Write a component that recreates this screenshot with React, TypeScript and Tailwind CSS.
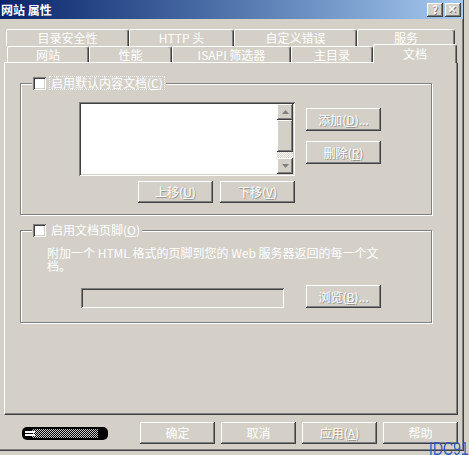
import clsx from 'clsx';

const raised =
	'shadow-[inset_-1px_-1px_#404040,inset_1px_1px_#ffffff,inset_-2px_-2px_#808080,inset_2px_2px_#d4d0c8]';
const sunken =
	'shadow-[inset_1px_1px_#808080,inset_-1px_-1px_#ffffff,inset_2px_2px_#404040,inset_-2px_-2px_#d4d0c8]';
const etched = 'border border-[#808080] shadow-[inset_1px_1px_#ffffff,1px_1px_#ffffff]';
const dim = '[text-shadow:1px_1px_0_#9a9892]';

const backTabs = [
	{ label: '目录安全性', w: 'w-[123px]' },
	{ label: 'HTTP 头', w: 'w-[105px]' },
	{ label: '自定义错误', w: 'w-[123px]' },
	{ label: '服务', w: 'w-[98px]' },
];

const frontTabs = [
	{ label: '网站', w: 'w-[82px]' },
	{ label: '性能', w: 'w-[83px]' },
	{ label: 'ISAPI 筛选器', w: 'w-[119px]' },
	{ label: '主目录', w: 'w-[82px]' },
];

function Tab({ label, w }: { label: string; w: string }) {
	return (
		<div
			className={clsx(
				w,
				'flex h-[17px] items-center justify-center rounded-tl-[2px] rounded-tr-[3px] border-l border-t border-r border-l-white border-t-white border-r-[#404040] shadow-[inset_-1px_0_#808080] text-white',
			)}
		>
			{label}
		</div>
	);
}

function Button({ children, className }: { children: React.ReactNode; className?: string }) {
	return (
		<div
			className={clsx(
				'flex w-[75px] items-center justify-center bg-[#d4d0c8] text-white',
				raised,
				className,
			)}
		>
			{children}
		</div>
	);
}

function Key({ k }: { k: string }) {
	return (
		<span>
			(<span className="underline">{k}</span>)
		</span>
	);
}

function Checkbox() {
	return <div className={clsx('h-[13px] w-[13px] bg-white', sunken)} />;
}

function Arrow({ up }: { up?: boolean }) {
	return (
		<div className={clsx('flex h-[16px] w-[16px] items-center justify-center bg-[#d4d0c8]', raised)}>
			<svg width="7" height="4" viewBox="0 0 7 4">
				{up ? (
					<path d="M3.5 0 L7 4 L0 4 Z" fill="#808080" />
				) : (
					<path d="M0 0 L7 0 L3.5 4 Z" fill="#808080" />
				)}
			</svg>
		</div>
	);
}

export default function App() {
	return (
		<div className="relative h-[455px] w-[469px] overflow-hidden bg-[#d4d0c8] font-['Noto_Sans_CJK_SC','Liberation_Sans',sans-serif] text-[12px] leading-[12px]">
			<div className="flex h-[451px] w-[464px] flex-col border-r border-b border-[#404040] shadow-[inset_-1px_-1px_#808080]">
				{/* title bar */}
				<div className="flex h-[19px] items-center bg-gradient-to-r from-[#0a246a] to-[#a6caf0] pl-[1px] pr-[2px]">
					<span className="font-bold text-white">网站 属性</span>
					<div className="ml-auto flex gap-[2px]">
						<div className={clsx('flex h-[14px] w-[16px] items-center justify-center bg-[#d4d0c8]', raised)}>
							<span className="text-[11px] font-bold leading-[11px] text-white [text-shadow:1px_1px_0_#808080]">?</span>
						</div>
						<div className={clsx('flex h-[14px] w-[16px] items-center justify-center bg-[#d4d0c8]', raised)}>
							<svg width="8" height="7" viewBox="0 0 8 7">
								<path d="M1 1 L7 7 M7 1 L1 7" stroke="#808080" strokeWidth="1.6" />
								<path d="M0 0 L6 6 M6 0 L0 6" stroke="#ffffff" strokeWidth="1.6" />
							</svg>
						</div>
					</div>
				</div>

				{/* tabs */}
				<div className="ml-[6px] mt-[10px] flex">
					{backTabs.map((t) => (
						<Tab key={t.label} label={t.label} w={t.w} />
					))}
				</div>
				<div className="ml-[7px] flex h-[16px] items-start">
					{frontTabs.map((t) => (
						<Tab key={t.label} label={t.label} w={t.w} />
					))}
					<div className="relative z-10 -mt-[2px] flex h-[19px] w-[84px] items-start justify-center rounded-tl-[2px] rounded-tr-[3px] border-l border-t border-r border-l-white border-t-white border-r-[#404040] bg-[#d4d0c8] pt-[3px] text-white shadow-[inset_-1px_0_#808080]">
						文档
					</div>
				</div>

				{/* panel */}
				<div className="ml-[4px] h-[353px] w-[454px] border-l border-t border-r border-b border-l-white border-t-white border-r-[#404040] border-b-[#404040] shadow-[inset_-1px_-1px_#808080]">
					{/* group 1 */}
					<div className={clsx('relative ml-[15px] mt-[20px] h-[132px] w-[412px]', etched)}>
						<div className="absolute left-[11px] top-[-8px] flex items-start bg-[#d4d0c8] px-[1px]">
							<div className="mt-[1px]">
								<Checkbox />
							</div>
							<div className="ml-[3px] border border-dotted border-white px-[1px] leading-[12px] text-white">
								启用默认内容文档<Key k="C" />
							</div>
						</div>

						<div className="flex pl-[58px] pt-[18px]">
							<div className="flex flex-col">
								<div className={clsx('flex h-[74px] w-[216px] justify-end bg-white p-[2px]', sunken)}>
									<div className="flex w-[16px] flex-col">
										<Arrow up />
										<div className={clsx('h-[32px] bg-[#d4d0c8]', raised)} />
										<div className="h-[6px] bg-[repeating-conic-gradient(#ffffff_0%_25%,#d4d0c8_0%_50%)] bg-[length:2px_2px]" />
										<Arrow />
									</div>
								</div>
								<div className="mt-[5px] flex justify-end gap-[7px]">
									<Button className={clsx('h-[22px]', dim)}>
										上移<Key k="U" />
									</Button>
									<Button className={clsx('h-[22px]', dim)}>
										下移<Key k="V" />
									</Button>
								</div>
							</div>
							<div className="ml-[11px] flex flex-col gap-[10px] pt-[6px]">
								<Button className={clsx('h-[23px]', dim)}>
									添加<Key k="D" />...
								</Button>
								<Button className={clsx('h-[23px]', dim)}>
									删除<Key k="R" />
								</Button>
							</div>
						</div>
					</div>

					{/* group 2 */}
					<div className={clsx('relative ml-[15px] mt-[15px] flex h-[93px] w-[412px] flex-col items-start', etched)}>
						<div className="absolute left-[11px] top-[-8px] flex items-start bg-[#d4d0c8] px-[1px]">
							<div className="mt-[1px]">
								<Checkbox />
							</div>
							<div className="ml-[4px] px-[1px] pt-[1px] text-white">
								启用文档页脚<Key k="O" />
							</div>
						</div>

						<div className="ml-[26px] mt-[15px] text-white">
							<div className="leading-[13px]">附加一个 HTML 格式的页脚到您的 Web 服务器返回的每一个文</div>
							<div className="leading-[13px]">档。</div>
						</div>
						<div className="mt-[13px] flex items-start">
							<div className={clsx('ml-[60px] mt-[3px] h-[20px] w-[203px] bg-[#d4d0c8]', sunken)} />
							<Button className={clsx('ml-[22px] h-[23px]', dim)}>
								浏览<Key k="B" />...
							</Button>
						</div>
					</div>
				</div>

				{/* bottom buttons */}
				<div className="mt-[7px] flex items-center pl-[22px]">
					<div className="relative h-[13px] w-[86px] overflow-hidden rounded-[5px] bg-black">
						<div className="absolute inset-x-[10px] inset-y-[2px] bg-[repeating-conic-gradient(#ffffff_0%_25%,#000000_0%_50%)] bg-[length:2px_2px] opacity-80" />
						<div className="absolute left-[3px] top-[4px] h-[5px] w-[10px] border-y-2 border-white" />
					</div>
					<div className="ml-[32px] flex gap-[6px]">
						<Button className="h-[22px]">确定</Button>
						<Button className="h-[22px]">取消</Button>
						<Button className={clsx('h-[22px]', dim)}>
							应用<Key k="A" />
						</Button>
						<Button className="h-[22px]">帮助</Button>
					</div>
				</div>
			</div>

			<div className="absolute left-[429px] top-[440px] origin-left scale-x-[0.78] font-['Liberation_Sans',sans-serif] text-[18px] leading-[18px] text-[#3058c0]">
				IDC91.
			</div>
		</div>
	);
}
